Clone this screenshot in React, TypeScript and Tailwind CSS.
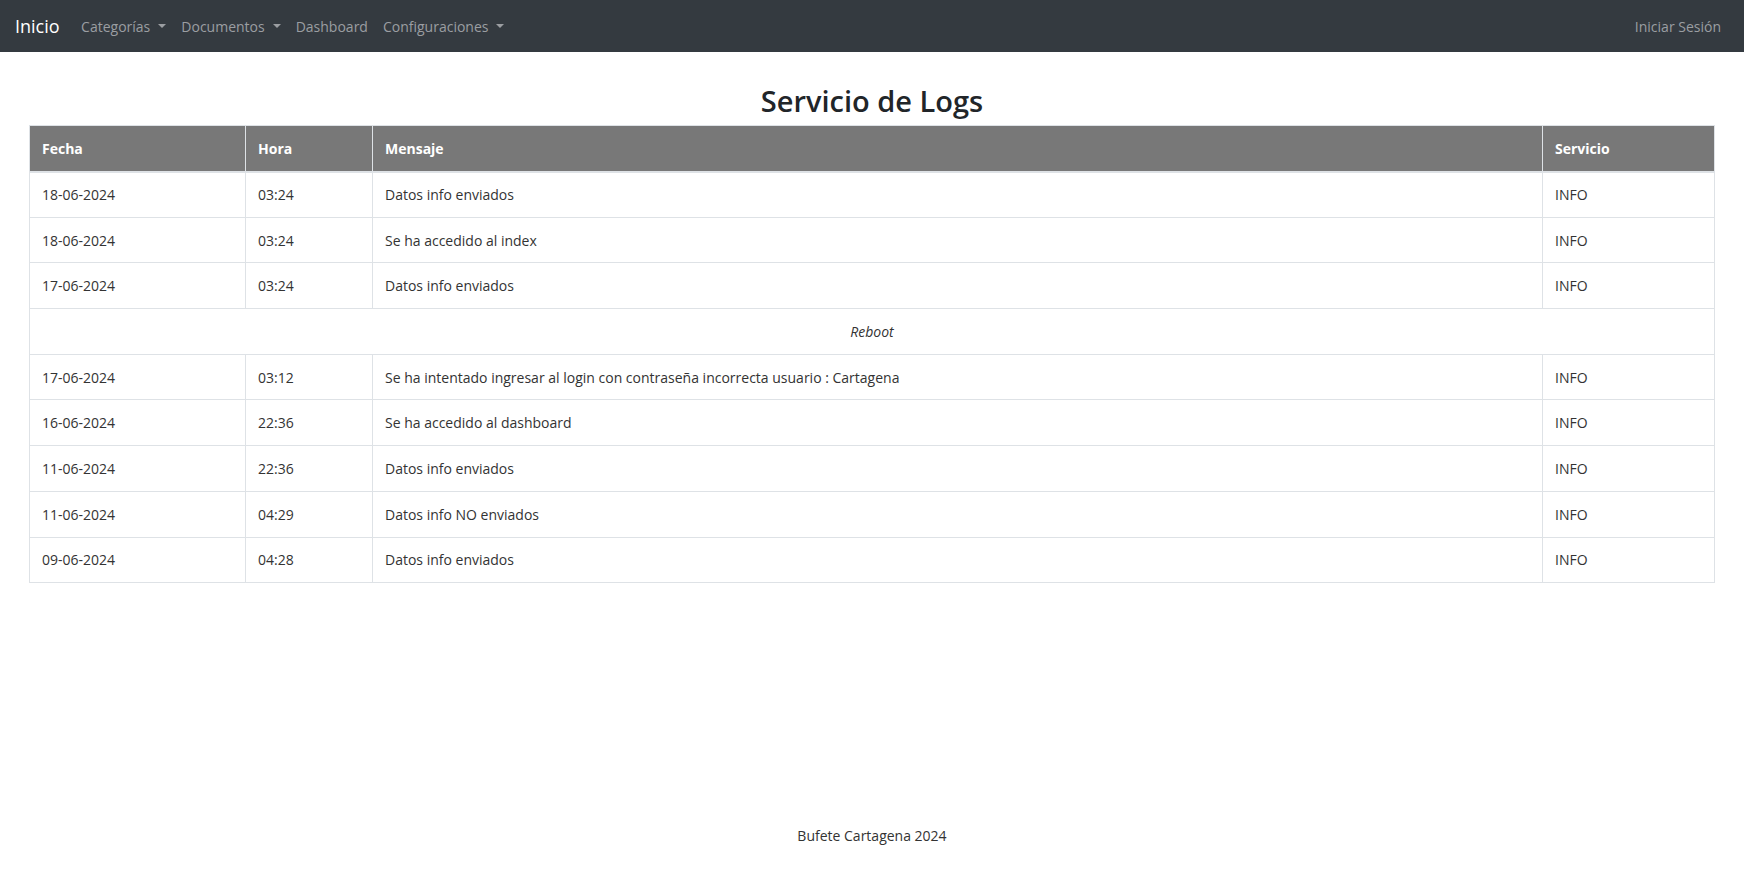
import { useState } from 'react'

type Log = { fecha: string; hora: string; mensaje: string; servicio: string } | { reboot: true }

const logs: Log[] = [
  { fecha: '18-06-2024', hora: '03:24', mensaje: 'Datos info enviados', servicio: 'INFO' },
  { fecha: '18-06-2024', hora: '03:24', mensaje: 'Se ha accedido al index', servicio: 'INFO' },
  { fecha: '17-06-2024', hora: '03:24', mensaje: 'Datos info enviados', servicio: 'INFO' },
  { reboot: true },
  { fecha: '17-06-2024', hora: '03:12', mensaje: 'Se ha intentado ingresar al login con contraseña incorrecta usuario : Cartagena', servicio: 'INFO' },
  { fecha: '16-06-2024', hora: '22:36', mensaje: 'Se ha accedido al dashboard', servicio: 'INFO' },
  { fecha: '11-06-2024', hora: '22:36', mensaje: 'Datos info enviados', servicio: 'INFO' },
  { fecha: '11-06-2024', hora: '04:29', mensaje: 'Datos info NO enviados', servicio: 'INFO' },
  { fecha: '09-06-2024', hora: '04:28', mensaje: 'Datos info enviados', servicio: 'INFO' },
]

function Caret() {
  return <span className="ml-[8px] inline-block align-middle border-x-[4px] border-t-[4px] border-x-transparent border-t-current" />
}

function NavLink({ label, dropdown }: { label: string; dropdown?: boolean }) {
  return (
    <a href="#" className="px-[7.5px] text-[14px] text-[#9b9ea2] hover:text-[#c8cbce] flex items-center">
      {label}
      {dropdown && <Caret />}
    </a>
  )
}

export default function App() {
  const [open] = useState(false)

  return (
    <div className="min-h-screen flex flex-col bg-white text-[#333] font-['Open_Sans',sans-serif]">
      <nav className="h-[52px] bg-[#343a40] flex items-center pl-[15px] pr-[23px]">
        <a href="#" className="text-[18px] text-white mr-[14px]">Inicio</a>
        <div className="flex items-center">
          <NavLink label="Categorías" dropdown />
          <NavLink label="Documentos" dropdown />
          <NavLink label="Dashboard" />
          <NavLink label="Configuraciones" dropdown />
        </div>
        <div className="ml-auto">
          <a href="#" className="text-[14px] text-[#9b9ea2]">Iniciar Sesión</a>
        </div>
        {open && <div />}
      </nav>

      <main className="flex-1 px-[29px]">
        <h2 className="text-center text-[29px] font-semibold leading-[37px] text-[#212529] mt-[30px] mb-[6px]">
          Servicio de Logs
        </h2>
        <table className="w-full table-fixed border-collapse text-[14px]">
          <thead>
            <tr className="bg-[#787878] text-white">
              <th className="w-[216px] h-[46px] px-[12px] text-left font-bold border border-[#dee2e6] border-b-2">Fecha</th>
              <th className="w-[127px] px-[12px] text-left font-bold border border-[#dee2e6] border-b-2">Hora</th>
              <th className="px-[12px] text-left font-bold border border-[#dee2e6] border-b-2">Mensaje</th>
              <th className="w-[172px] px-[12px] text-left font-bold border border-[#dee2e6] border-b-2">Servicio</th>
            </tr>
          </thead>
          <tbody>
            {logs.map((log, i) =>
              'reboot' in log ? (
                <tr key={i}>
                  <td colSpan={4} className="h-[45.7px] text-center italic border border-[#dee2e6]">Reboot</td>
                </tr>
              ) : (
                <tr key={i}>
                  <td className="h-[45.7px] px-[12px] border border-[#dee2e6]">{log.fecha}</td>
                  <td className="px-[12px] border border-[#dee2e6]">{log.hora}</td>
                  <td className="px-[12px] border border-[#dee2e6]">{log.mensaje}</td>
                  <td className="px-[12px] border border-[#dee2e6]">{log.servicio}</td>
                </tr>
              )
            )}
          </tbody>
        </table>
      </main>

      <footer className="text-center text-[14px] leading-[20px] pb-[46px]">
        Bufete Cartagena 2024
      </footer>
    </div>
  )
}
